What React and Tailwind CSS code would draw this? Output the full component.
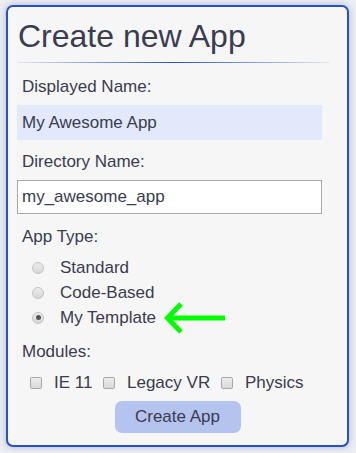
import { useState } from "react";

const font = { fontFamily: '"Liberation Sans", Arial, sans-serif' };

function Radio({ checked }) {
  return (
    <span className="relative grid place-items-center w-[12px] h-[12px] rounded-full border border-[#c4c4c4] bg-linear-to-b from-[#ececec] to-[#d6d6d6]">
      {checked && <span className="w-[5px] h-[5px] rounded-full bg-[#555]" />}
    </span>
  );
}

function Check() {
  return <span className="block w-[12px] h-[12px] rounded-[2px] border border-[#a8a8a8] bg-linear-to-b from-[#ececec] to-[#dadada]" />;
}

function Arrow() {
  return (
    <svg width="62" height="34" viewBox="0 0 62 34" className="ml-[8px] shrink-0">
      <g stroke="#00ff00" strokeWidth="5" fill="none">
        <path d="M3 17 H61" />
        <path d="M17 3 L3.5 17 L17 31" />
      </g>
    </svg>
  );
}

export default function App() {
  const [type] = useState("tpl");
  const types = [
    { k: "std", label: "Standard" },
    { k: "code", label: "Code-Based" },
    { k: "tpl", label: "My Template" },
  ];

  return (
    <div style={font} className="w-[356px] h-[453px] bg-[#eceef4] pt-[5px] pl-[6px] text-[#3a3c4f]">
      <div className="w-[343px] h-[442px] rounded-[7px] border-2 border-[#2852c4] bg-[#f6f6f6] shadow-[0_0_7px_rgba(70,80,130,0.35)] px-[9px] pt-[11px]">
        <h1 className="ml-[1px] text-[32px] leading-[36px]">Create new App</h1>
        <div className="mt-[8px] ml-[1px] w-[312px] h-px bg-linear-to-r from-[#e6e6ea] via-[#2a52c0] to-[#e6e6ea]" />

        <div className="mt-[14px] pl-[5px] text-[17px] leading-[20px]">Displayed Name:</div>
        <div className="mt-[8px] w-[305px] h-[35px] bg-[#e1e9fb] flex items-center pl-[5px] text-[17px]">My Awesome App</div>

        <div className="mt-[12px] pl-[5px] text-[17px] leading-[20px]">Directory Name:</div>
        <div className="mt-[8px] w-[305px] h-[34px] bg-white border border-[#a9a9a9] flex items-center pl-[4px] text-[17px]">my_awesome_app</div>

        <div className="mt-[13px] pl-[5px] text-[17px] leading-[20px]">App Type:</div>
        <div className="mt-[8px]">
          {types.map((t) => (
            <div key={t.k} className="flex items-center h-[25px] pl-[15px] text-[17px]">
              <Radio checked={type === t.k} />
              <span className="ml-[16px]">{t.label}</span>
              {t.k === "tpl" && <Arrow />}
            </div>
          ))}
        </div>

        <div className="mt-[12px] pl-[5px] text-[17px] leading-[20px]">Modules:</div>
        <div className="mt-[11px] flex items-center h-[20px] pl-[13px] text-[17px]">
          <div className="flex items-center w-[73px]"><Check /><span className="ml-[12px]">IE 11</span></div>
          <div className="flex items-center w-[118px]"><Check /><span className="ml-[12px]">Legacy VR</span></div>
          <div className="flex items-center"><Check /><span className="ml-[12px]">Physics</span></div>
        </div>

        <button className="mt-[8px] mx-auto block w-[126px] h-[32px] rounded-[7px] bg-[#b5c3ef] text-[17px] text-[#3a3c4f]">Create App</button>
      </div>
    </div>
  );
}
